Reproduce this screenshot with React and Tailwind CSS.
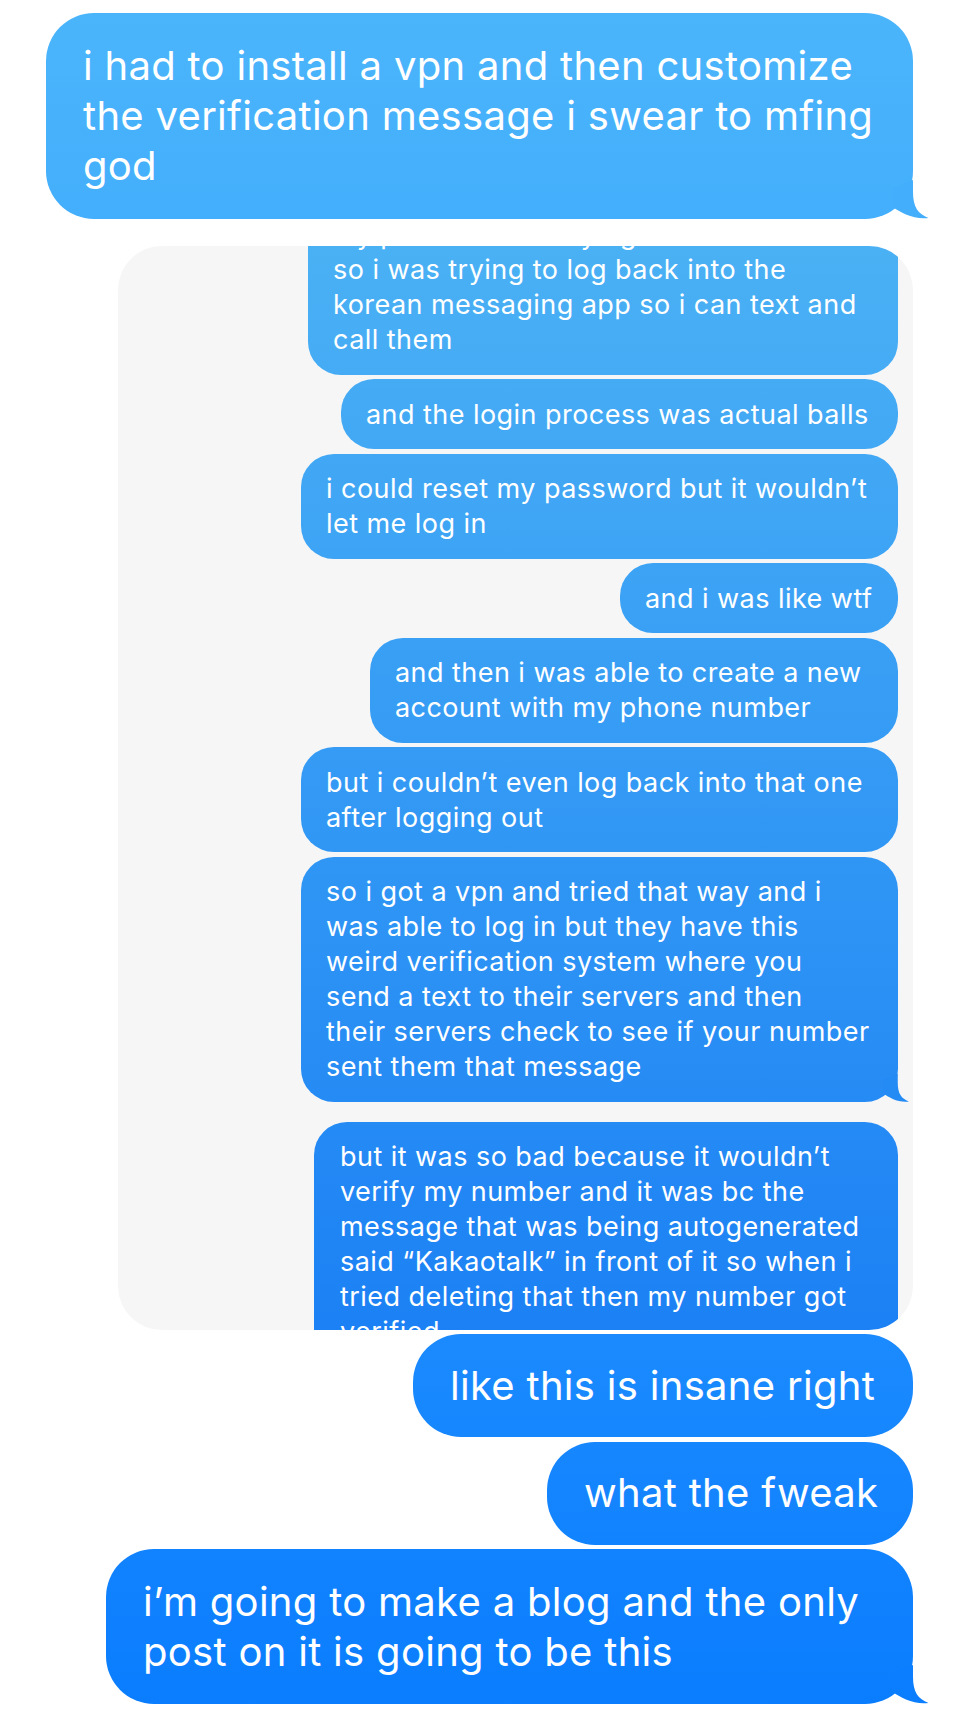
import React from 'react'

// iMessage-ish thread: outer bubbles + a pasted screenshot card in the middle

function Tail({ color, small }) {
  // tail sits on the bubble's bottom-right corner
  return (
    <svg
      viewBox="0 0 50 40"
      className={small ? 'absolute -right-[12px] -bottom-[1px] w-[36px] h-[29px]' : 'absolute -right-[17px] -bottom-[1px] w-[50px] h-[40px]'}
    >
      <path
        d="M33 0 L33 12 C33 27 38 34 48.5 38 C41 39 33 37.5 26 34.5 C21 32 16 29.5 13 27 L13 8 Z"
        fill={color}
      />
    </svg>
  )
}

function Outer({ w, py = 'py-[27px]', tail, children }) {
  return (
    <div
      className={`relative ${w} ${py} rounded-[48px] bg-linear-to-b from-[#4bb5fb] to-[#097dff] bg-fixed px-[37px] text-[40px] tracking-[0.3px] leading-[50px] text-white whitespace-nowrap`}
    >
      {children}
      {tail && <Tail color={tail} />}
    </div>
  )
}

function Inner({ w, pl = 'pl-[25px]', tail, children }) {
  return (
    <div
      className={`relative ${w} ${pl} py-[17.5px] rounded-[33px] bg-linear-to-b from-[#55bbf4] to-[#0a6ef3] bg-fixed text-[27px] tracking-[0.45px] leading-[35px] text-white whitespace-nowrap`}
    >
      {children}
      {tail && <Tail color={tail} small />}
    </div>
  )
}

export default function App() {
  return (
    <div className="w-[961px] h-[1714px] bg-white pt-[13px] pr-[48px] flex flex-col items-end gap-[4.5px] font-[Inter,sans-serif] overflow-hidden">
      <Outer w="w-[867px]" py="py-[28px]" tail="#43aefb">
        i had to install a vpn and then customize
        <br />
        the verification message i swear to mfing
        <br />
        god
      </Outer>

      {/* screenshot card */}
      <div className="mt-[22px] w-[795px] h-[1084px] rounded-[44px] bg-[#f6f6f6] overflow-hidden shrink-0">
        <div className="-mt-[46px] pr-[15px] flex flex-col items-end gap-[4.5px]">
          <Inner w="w-[590px]">
            my parents were trying to
            <br />
            so i was trying to log back into the
            <br />
            korean messaging app so i can text and
            <br />
            call them
          </Inner>
          <Inner w="w-[557px]">and the login process was actual balls</Inner>
          <Inner w="w-[597px]">
            i could reset my password but it wouldn’t
            <br />
            let me log in
          </Inner>
          <Inner w="w-[278px]">and i was like wtf</Inner>
          <Inner w="w-[528px]">
            and then i was able to create a new
            <br />
            account with my phone number
          </Inner>
          <Inner w="w-[597px]">
            but i couldn’t even log back into that one
            <br />
            after logging out
          </Inner>
          <Inner w="w-[597px]" tail="#248af4">
            so i got a vpn and tried that way and i
            <br />
            was able to log in but they have this
            <br />
            weird verification system where you
            <br />
            send a text to their servers and then
            <br />
            their servers check to see if your number
            <br />
            sent them that message
          </Inner>
          <div className="mt-[15.5px]">
            <Inner w="w-[584px]" pl="pl-[26px]">
              but it was so bad because it wouldn’t
              <br />
              verify my number and it was bc the
              <br />
              message that was being autogenerated
              <br />
              said “Kakaotalk” in front of it so when i
              <br />
              tried deleting that then my number got
              <br />
              verified
            </Inner>
          </div>
        </div>
      </div>

      <Outer w="w-[500px]" py="py-[26.5px]">like this is insane right</Outer>
      <Outer w="w-[366px]" py="py-[26.5px]">what the fweak</Outer>
      <Outer w="w-[807px]" py="py-[27.5px]" tail="#0a7eff">
        i’m going to make a blog and the only
        <br />
        post on it is going to be this
      </Outer>
    </div>
  )
}
